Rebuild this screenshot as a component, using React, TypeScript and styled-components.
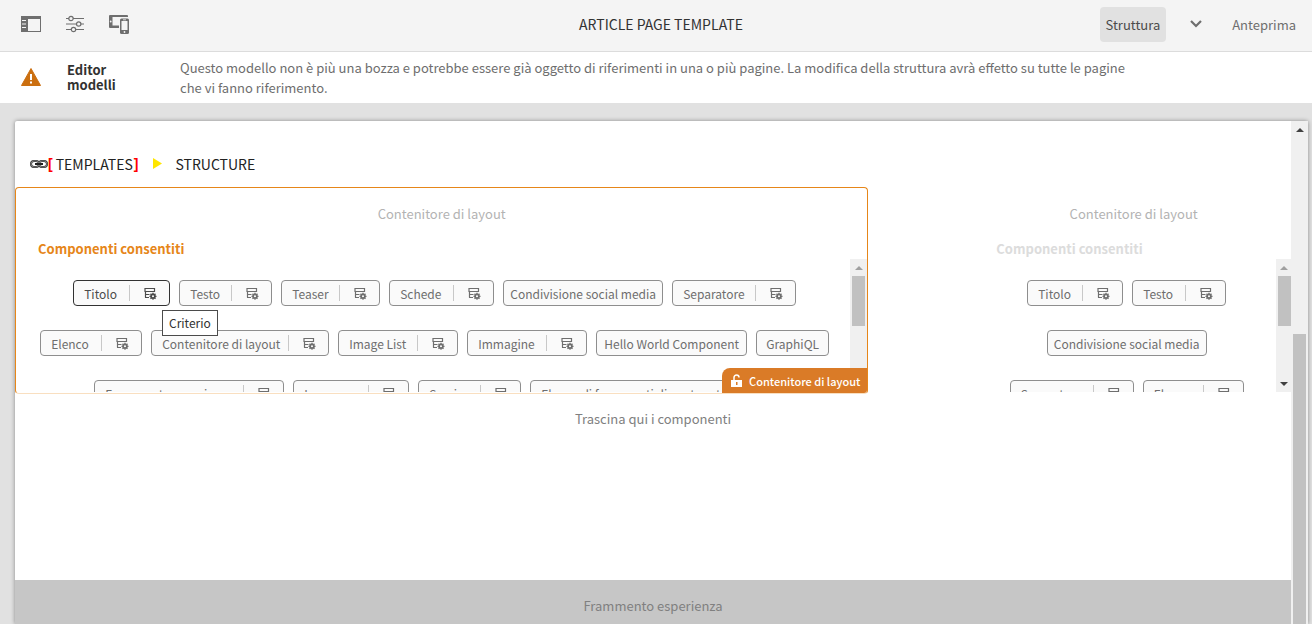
import React from "react";
import styled, { createGlobalStyle, css } from "styled-components";

const Global = createGlobalStyle`
  * { box-sizing: border-box; }
  html, body, #root { height: 100%; }
  body {
    margin: 0;
    background: #e1e1e1;
    color: #6e6e6e;
    font-family: "Noto Sans CJK SC", "Noto Sans", sans-serif;
    font-size: 13px;
    line-height: 20px;
  }
  button { font: inherit; color: inherit; cursor: pointer; }
`;

const Page = styled.div`
  display: flex;
  flex-direction: column;
  height: 100%;
  overflow: hidden;
`;

const Toolbar = styled.header`
  display: grid;
  grid-template-columns: 1fr auto 1fr;
  align-items: center;
  flex: none;
  height: 52px;
  padding: 0 10px 3px 20px;
  background: #f4f4f4;
  border-bottom: 1px solid #dcdcdc;
`;

const ToolGroup = styled.div<{ $end?: boolean }>`
  display: flex;
  align-items: center;
  gap: ${(p) => (p.$end ? 19 : 22)}px;
  justify-content: ${(p) => (p.$end ? "flex-end" : "flex-start")};
`;

const IconButton = styled.button`
  display: grid;
  place-items: center;
  width: 22px;
  height: 32px;
  padding: 0;
  border: 0;
  background: none;
  color: #6e6e6e;
`;

const PageTitle = styled.h1`
  margin: 0;
  font-size: 14px;
  font-weight: 400;
  color: #323232;
`;

const ModeButton = styled.button<{ $active?: boolean }>`
  height: 35px;
  padding: 2px 6px 0;
  border: 0;
  border-radius: 4px;
  background: ${(p) => (p.$active ? "#e1e1e1" : "transparent")};
  color: ${(p) => (p.$active ? "#4b4b4b" : "#6e6e6e")};
`;

const Notice = styled.section`
  display: flex;
  align-items: center;
  flex: none;
  height: 51px;
  padding: 0 20px 2px;
  background: #fff;
`;

const NoticeTitle = styled.h2`
  flex: none;
  width: 113px;
  margin: 0 0 0 25px;
  font-size: 13px;
  line-height: 15px;
  font-weight: 700;
  color: #323232;
`;

const NoticeText = styled.p`
  max-width: 960px;
  margin: 0;
  padding-top: 2px;
`;

const Stage = styled.main`
  display: flex;
  flex: 1;
  min-height: 0;
  margin: 18px 4px 0 15px;
  background: #fff;
  border-radius: 2px 2px 0 0;
  box-shadow: 0 0 4px rgba(0, 0, 0, 0.4);
`;

const Content = styled.div`
  display: flex;
  flex-direction: column;
  flex: 1;
  min-width: 0;
  overflow: hidden;
`;

const Breadcrumb = styled.nav`
  display: flex;
  align-items: center;
  flex: none;
  height: 66px;
  padding: 20px 15px 0;
  color: #222;
  font-size: 14px;
`;

const CrumbLink = styled.a`
  display: flex;
  align-items: center;
  color: inherit;
  text-decoration: none;
`;

const CrumbName = styled.span`
  padding: 0 1px 0 3px;
`;

const Bracket = styled.span`
  color: #f00;
  font-family: "Liberation Sans", sans-serif;
  font-weight: 700;
`;

const CrumbArrow = styled.svg`
  margin: 0 13px 0 15px;
`;

/* The grid runs a little under the page scroll bar, which clips the second column. */
const Columns = styled.div`
  display: grid;
  grid-template-columns: 2fr 1fr;
  flex: none;
  margin-right: -4px;
`;

const Container = styled.section<{ $selected?: boolean }>`
  position: relative;
  height: 207px;
  overflow: hidden;
  border: 1px solid transparent;
  border-radius: 4px;
  ${(p) =>
    p.$selected
      ? css`
          border-color: #e68619;
          border-bottom-color: #f9dfc0;
        `
      : css`
          margin: 0 2px 0 105px;
          border-right: 0;
        `}
`;

const ContainerName = styled.p`
  margin: 16px 0 15px;
  color: #b3b3b3;
  text-align: center;
`;

const AllowedTitle = styled.h3<{ $muted?: boolean }>`
  margin: 0 22px;
  font-size: 13px;
  font-weight: 700;
  color: ${(p) => (p.$muted ? "#dcdcdc" : "#e68619")};
`;

const ScrollArea = styled.div`
  display: flex;
  height: 133px;
`;

const ChipList = styled.div`
  display: flex;
  flex: 1;
  flex-direction: column;
  gap: 24px;
  min-width: 0;
  padding: 21px 8px 0 11px;
  overflow: hidden;
`;

const ChipRow = styled.div`
  display: flex;
  flex: none;
  justify-content: center;
  gap: 9px;
`;

const Chip = styled.div<{ $width: number; $focused?: boolean; $plain?: boolean }>`
  display: flex;
  align-items: center;
  justify-content: ${(p) => (p.$plain ? "center" : "space-between")};
  flex: none;
  width: ${(p) => p.$width}px;
  height: 26px;
  padding: 0 ${(p) => (p.$plain ? 4 : 10)}px;
  border: 1px solid ${(p) => (p.$focused ? "#323232" : "#8e8e8e")};
  border-radius: 4px;
  background: #fafafa;
  color: ${(p) => (p.$focused ? "#4b4b4b" : "#6e6e6e")};
  font-size: 12px;
  white-space: nowrap;
`;

const ChipLabel = styled.span`
  padding-top: 2px;
`;

const PolicyButton = styled.button`
  display: flex;
  align-items: center;
  flex: none;
  width: 30px;
  height: 16px;
  padding: 0 0 0 14px;
  border: 0;
  border-left: 1px solid #c8c8c8;
  background: none;
`;

const Tooltip = styled.div`
  position: absolute;
  left: 146px;
  top: 122px;
  padding: 2px 6px;
  border: 1px solid #4b4b4b;
  background: #fff;
  color: #323232;
  font-size: 12px;
`;

const ContainerTag = styled.div`
  position: absolute;
  right: 0;
  bottom: 0;
  display: flex;
  align-items: center;
  gap: 7px;
  height: 25px;
  padding: 0 7px 0 9px;
  border-radius: 8px 0 0 0;
  background: #da7b27;
  color: #fff;
  font-size: 11px;
  font-weight: 500;
`;

const ScrollTrack = styled.div`
  display: flex;
  flex-direction: column;
  align-items: center;
  flex: none;
  width: 17px;
  background: #f0f0f0;
`;

const ScrollThumb = styled.div<{ $page?: boolean }>`
  width: 13px;
  background: #c1c1c1;
  ${(p) => (p.$page ? "flex: 1; margin-top: 196px;" : "height: 50px; margin-bottom: auto;")}
`;

const DropZone = styled.p`
  flex: 1;
  margin: 0;
  padding-top: 15px;
  text-align: center;
  color: #808080;
`;

const Fragment = styled.footer`
  flex: none;
  height: 44px;
  padding-top: 16px;
  background: #c6c6c6;
  color: #808080;
  text-align: center;
`;

const PolicyIcon = () => (
  <svg width="13" height="13" viewBox="0 0 13 13" fill="none" stroke="currentColor" aria-hidden="true">
    <path d="M1 1.500h9.500v3H1zM1.500 4v6.500M1 7.500h4.500M1 10.500h4" strokeWidth="1.200" />
    <circle cx="9" cy="9.300" r="1.900" strokeWidth="1.700" />
    <path d="M9 5.800v1.400M9 11.400v1.400M5.500 9.300h1.400M11.100 9.300h1.400M6.500 6.800l1 1M10.500 10.800l1 1M6.500 11.800l1-1M10.500 7.800l1-1" strokeWidth="1.300" />
  </svg>
);

const Arrow = ({ down, dark }: { down?: boolean; dark?: boolean }) => (
  <svg width="16" height="17" viewBox="0 0 16 17" aria-hidden="true">
    <path d={down ? "M4 7h8l-4 4z" : "M4 11h8L8 7z"} fill={dark ? "#404040" : "#a0a0a0"} />
  </svg>
);

type Item = { name: string; width: number; policy?: boolean; focused?: boolean };

const mainRows: Item[][] = [
  [
    { name: "Titolo", width: 97, policy: true, focused: true },
    { name: "Testo", width: 93, policy: true },
    { name: "Teaser", width: 99, policy: true },
    { name: "Schede", width: 105, policy: true },
    { name: "Condivisione social media", width: 160 },
    { name: "Separatore", width: 124, policy: true },
  ],
  [
    { name: "Elenco", width: 102, policy: true },
    { name: "Contenitore di layout", width: 178, policy: true },
    { name: "Image List", width: 120, policy: true },
    { name: "Immagine", width: 120, policy: true },
    { name: "Hello World Component", width: 151 },
    { name: "GraphiQL", width: 73 },
  ],
  [
    { name: "Frammento esperienza", width: 190, policy: true },
    { name: "Incorpora", width: 116, policy: true },
    { name: "Scarica", width: 103, policy: true },
    { name: "Elenco di frammenti di contenuto", width: 245, policy: true },
  ],
];

const sideRows: Item[][] = [
  [
    { name: "Titolo", width: 96, policy: true },
    { name: "Testo", width: 94, policy: true },
  ],
  [{ name: "Condivisione social media", width: 160 }],
  [
    { name: "Separatore", width: 124, policy: true },
    { name: "Elenco", width: 101, policy: true },
  ],
];

const Chips = ({ rows }: { rows: Item[][] }) => (
  <ChipList>
    {rows.map((row, i) => (
      <ChipRow key={i}>
        {row.map((item) => (
          <Chip key={item.name} $width={item.width} $focused={item.focused} $plain={!item.policy}>
            <ChipLabel>{item.name}</ChipLabel>
            {item.policy && (
              <PolicyButton aria-label={`Criterio ${item.name}`}>
                <PolicyIcon />
              </PolicyButton>
            )}
          </Chip>
        ))}
      </ChipRow>
    ))}
  </ChipList>
);

export default function App() {
  return (
    <Page>
      <Global />
      <Toolbar>
        <ToolGroup>
          <IconButton aria-label="Pannello laterale">
            <svg width="20" height="16" viewBox="0 0 20 16" aria-hidden="true">
              <path d="M0 0h20v16H0z" fill="currentColor" />
              <path d="M7 3h12v12H7z" fill="#f4f4f4" />
              <path d="M1 4.500h4M1 8h4M1 11.500h4" stroke="#f4f4f4" />
            </svg>
          </IconButton>
          <IconButton aria-label="Informazioni pagina">
            <svg width="20" height="18" viewBox="0 0 20 18" fill="none" stroke="currentColor" aria-hidden="true">
              <path d="M1 3.500h3M8 3.500h11M1 9h10.500M16 9h3M1 14.500h5M11 14.500h8" strokeWidth="1.200" />
              <circle cx="6" cy="3.500" r="2.200" strokeWidth="1.200" />
              <circle cx="13.700" cy="9" r="2.200" strokeWidth="1.200" />
              <circle cx="8.500" cy="14.500" r="2.200" strokeWidth="1.200" />
            </svg>
          </IconButton>
          <IconButton aria-label="Emulatore">
            <svg width="20" height="20" viewBox="0 0 20 20" aria-hidden="true">
              <path d="M1 1h17a1 1 0 0 1 1 1v1H3.500v8.500H10V14H1a1 1 0 0 1-1-1V2a1 1 0 0 1 1-1z" fill="currentColor" />
              <circle cx="1.700" cy="7.500" r="0.900" fill="#f4f4f4" />
              <rect x="11" y="4.500" width="9" height="15.500" rx="1.500" fill="currentColor" />
              <path d="M12.500 7h6v9h-6z" fill="#f4f4f4" />
              <path d="M14 5.800h3" stroke="#f4f4f4" strokeWidth="0.800" />
              <circle cx="15.500" cy="18" r="0.900" fill="#f4f4f4" />
            </svg>
          </IconButton>
        </ToolGroup>
        <PageTitle>ARTICLE PAGE TEMPLATE</PageTitle>
        <ToolGroup $end>
          <ModeButton $active>Struttura</ModeButton>
          <IconButton aria-label="Altre modalità">
            <svg width="12" height="8" viewBox="0 0 12 8" fill="none" stroke="currentColor" strokeWidth="2.200" aria-hidden="true">
              <path d="M1 1l5 5 5-5" />
            </svg>
          </IconButton>
          <ModeButton>Anteprima</ModeButton>
        </ToolGroup>
      </Toolbar>
      <Notice>
        <svg width="22" height="18" viewBox="0 0 22 18" role="img" aria-label="Avviso">
          <path d="M11 .5L20.500 17.500h-19z" fill="#cb6f10" stroke="#cb6f10" strokeLinejoin="round" />
          <path d="M10 6h2v6h-2zM10 13.500h2v2h-2z" fill="#fff" />
        </svg>
        <NoticeTitle>
          Editor
          <br />
          modelli
        </NoticeTitle>
        <NoticeText>
          Questo modello non è più una bozza e potrebbe essere già oggetto di riferimenti in una o più pagine. La modifica
          della struttura avrà effetto su tutte le pagine che vi fanno riferimento.
        </NoticeText>
      </Notice>
      <Stage>
        <Content>
          <Breadcrumb>
            <CrumbLink href="#templates">
              <svg width="18" height="8" viewBox="0 0 18 8" fill="none" aria-hidden="true">
                <rect x="1" y="1" width="8" height="6" rx="3" stroke="#333" strokeWidth="2" />
                <rect x="9" y="1" width="8" height="6" rx="3" stroke="#333" strokeWidth="2" />
                <rect x="1" y="1" width="8" height="6" rx="3" stroke="#999" strokeWidth="0.700" />
                <rect x="9" y="1" width="8" height="6" rx="3" stroke="#999" strokeWidth="0.700" />
                <path d="M5 4h8" stroke="#222" strokeWidth="2" />
              </svg>
              <Bracket>[</Bracket>
              <CrumbName>TEMPLATES</CrumbName>
              <Bracket>]</Bracket>
            </CrumbLink>
            <CrumbArrow width="9" height="12" viewBox="0 0 9 12" aria-hidden="true">
              <path d="M0 0l9 5.500-9 5.500z" fill="#ffe600" />
            </CrumbArrow>
            <span>STRUCTURE</span>
          </Breadcrumb>
          <Columns>
            <Container $selected>
              <ContainerName>Contenitore di layout</ContainerName>
              <AllowedTitle>Componenti consentiti</AllowedTitle>
              <ScrollArea>
                <Chips rows={mainRows} />
                <ScrollTrack>
                  <Arrow />
                  <ScrollThumb />
                </ScrollTrack>
              </ScrollArea>
              <Tooltip role="tooltip">Criterio</Tooltip>
              <ContainerTag>
                <svg width="11" height="13" viewBox="0 0 11 13" fill="none" aria-hidden="true">
                  <path d="M3 6V3.500a2.500 2.500 0 0 1 5 0" stroke="#fff" strokeWidth="1.500" />
                  <path d="M0 6h11v7H0z" fill="#fff" />
                  <path d="M5 8h1.500v3H5z" fill="#da7b27" />
                </svg>
                Contenitore di layout
              </ContainerTag>
            </Container>
            <Container>
              <ContainerName>Contenitore di layout</ContainerName>
              <AllowedTitle $muted>Componenti consentiti</AllowedTitle>
              <ScrollArea>
                <Chips rows={sideRows} />
                <ScrollTrack>
                  <Arrow />
                  <ScrollThumb />
                  <Arrow down dark />
                </ScrollTrack>
              </ScrollArea>
            </Container>
          </Columns>
          <DropZone>Trascina qui i componenti</DropZone>
          <Fragment>Frammento esperienza</Fragment>
        </Content>
        <ScrollTrack>
          <Arrow dark />
          <ScrollThumb $page />
        </ScrollTrack>
      </Stage>
    </Page>
  );
}
